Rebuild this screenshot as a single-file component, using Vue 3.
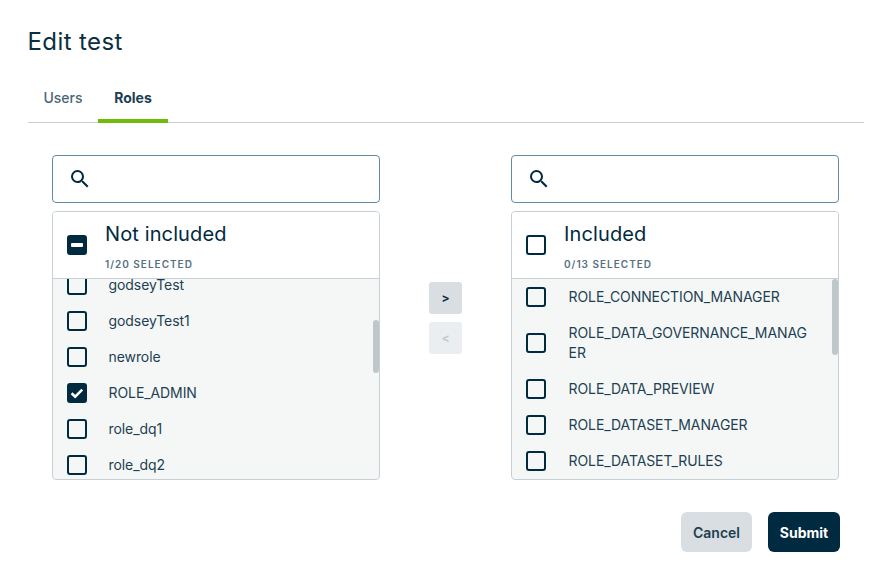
<script setup>
const panels = [
  {
    title: 'Not included', count: '1/20 SELECTED', head: 'mixed', cls: 'left',
    items: [
      { t: 'godseyTest' }, { t: 'godseyTest1' }, { t: 'newrole' },
      { t: 'ROLE_ADMIN', on: true }, { t: 'role_dq1' }, { t: 'role_dq2' },
    ],
  },
  {
    title: 'Included', count: '0/13 SELECTED', head: 'off', cls: 'right',
    items: [
      { t: 'ROLE_CONNECTION_MANAGER' }, { t: 'ROLE_DATA_GOVERNANCE_MANAGER' },
      { t: 'ROLE_DATA_PREVIEW' }, { t: 'ROLE_DATASET_MANAGER' }, { t: 'ROLE_DATASET_RULES' },
    ],
  },
]
</script>

<template>
  <div class="page">
    <h1 class="title">Edit test</h1>
    <div class="tabs">
      <div class="tab">Users</div>
      <div class="tab active">Roles</div>
    </div>
    <div class="transfer">
      <template v-for="(p, i) in panels" :key="p.title">
        <section class="side">
          <div class="search">
            <svg class="search-icon" viewBox="0 0 24 24" width="24" height="24">
              <path fill="#002a3f" d="M15.5 14h-.79l-.28-.27A6.47 6.47 0 0 0 16 9.5 6.5 6.5 0 1 0 9.5 16c1.61 0 3.09-.59 4.23-1.57l.27.28v.79l5 4.99L20.49 19l-4.99-5zm-6 0C7.01 14 5 11.99 5 9.5S7.01 5 9.5 5 14 7.01 14 9.5 11.99 14 9.5 14z"/>
            </svg>
          </div>
          <div class="panel">
            <div class="head">
              <span class="box" :class="{ filled: p.head === 'mixed' }">
                <span v-if="p.head === 'mixed'" class="dash"></span>
              </span>
              <div class="head-text">
                <div class="head-title">{{ p.title }}</div>
                <div class="head-count">{{ p.count }}</div>
              </div>
            </div>
            <div class="list" :class="p.cls">
              <div class="rows">
                <div v-for="it in p.items" :key="it.t" class="row">
                  <span class="box" :class="{ filled: it.on }">
                    <svg v-if="it.on" viewBox="0 0 20 20" width="20" height="20" class="check">
                      <path d="M4.6 10.2l3.6 3.4L15.2 6.6" fill="none" stroke="#fff" stroke-width="2.6"/>
                    </svg>
                  </span>
                  <span class="label">{{ it.t }}</span>
                </div>
              </div>
              <div class="thumb"></div>
            </div>
          </div>
        </section>
        <div v-if="i === 0" class="moves">
          <button class="move">&gt;</button>
          <button class="move off">&lt;</button>
        </div>
      </template>
    </div>
    <div class="footer">
      <button class="btn cancel">Cancel</button>
      <button class="btn submit">Submit</button>
    </div>
  </div>
</template>

<style>
html, body { margin: 0; background: #fff; }
</style>

<style scoped>
.page {
  width: 891px;
  height: 588px;
  box-sizing: border-box;
  padding: 27px 27px 0 28px;
  font-family: Inter, "Liberation Sans", sans-serif;
  color: #002a3f;
  overflow: hidden;
}
.title {
  margin: 0 0 0 -0.5px;
  font-size: 24px;
  line-height: 30px;
  font-weight: 400;
  letter-spacing: 0.4px;
  color: #0b2f42;
}
.tabs {
  display: flex;
  margin-top: 19px;
  height: 46px;
  border-bottom: 1px solid #c5d0d6;
}
.tab {
  width: 70px;
  box-sizing: border-box;
  text-align: center;
  font-size: 14px;
  line-height: 44px;
  color: #4c6675;
  font-weight: 500;
}
.tab.active {
  color: #1d3f51;
  font-weight: 700;
  height: 47px;
  border-bottom: 4px solid #6fbb0a;
}
.transfer {
  display: flex;
  margin: 32px 0 0 24px;
  align-items: flex-start;
}
.side { width: 328px; flex: none; }
.search {
  height: 48px;
  box-sizing: border-box;
  border: 1px solid #648ba3;
  border-radius: 4px;
  display: flex;
  align-items: center;
  padding-left: 15px;
}
.search-icon { display: block; }
.panel {
  margin-top: 8px;
  height: 269px;
  box-sizing: border-box;
  border: 1px solid #c5d0d6;
  border-radius: 4px;
  overflow: hidden;
  background: #f5f7f7;
}
.head {
  height: 66px;
  background: #fff;
  border-bottom: 1px solid #c5d0d6;
  display: flex;
  align-items: center;
  padding-left: 14px;
}
.box {
  width: 20px;
  height: 20px;
  flex: none;
  box-sizing: border-box;
  border: 2px solid #002a3f;
  border-radius: 3px;
  position: relative;
  display: block;
}
.box.filled { background: #002a3f; }
.check { position: absolute; left: -2px; top: -2px; display: block; }
.dash {
  position: absolute;
  left: 2px;
  right: 2px;
  top: 6px;
  height: 4px;
  border-radius: 1px;
  background: #fff;
}
.head-text { margin-left: 18px; padding-top: 2px; }
.head-title {
  font-size: 20px;
  line-height: 24px;
  color: #002a3f;
  letter-spacing: 0.12px;
}
.head-count {
  margin-top: 12px;
  font-size: 10px;
  line-height: 12px;
  font-weight: 600;
  letter-spacing: 1px;
  color: #56717f;
}
.list { position: relative; height: 201px; overflow: hidden; }
.list.left .rows { margin-top: -12px; }
.row {
  display: flex;
  align-items: center;
  padding: 8px 0 8px 14px;
}
.label {
  margin-left: 21.6px;
  width: 240px;
  font-size: 14px;
  line-height: 20px;
  letter-spacing: -0.1px;
  color: #1d3f51;
  word-break: break-all;
}
.list.right .label { margin-left: 22.6px; }
.thumb {
  position: absolute;
  right: 0;
  width: 6px;
  border-radius: 3px;
  background: #bfc7cb;
}
.list.left .thumb { top: 41px; height: 53px; }
.list.right .thumb { top: 0; height: 76px; }
.moves {
  width: 131px;
  flex: none;
  display: flex;
  flex-direction: column;
  align-items: center;
  gap: 8px;
  margin-top: 127px;
}
.move {
  width: 33px;
  height: 32px;
  border: 0;
  padding: 0 0 2px;
  border-radius: 3px;
  background: #d9dee2;
  color: #002a3f;
  font-family: inherit;
  font-size: 12px;
  font-weight: 700;
}
.move.off { background: #ebeef0; color: #c0c8cd; }
.footer {
  display: flex;
  justify-content: flex-end;
  gap: 16px;
  margin: 32px 24px 0 0;
}
.btn {
  height: 40px;
  border: 0;
  padding: 0;
  border-radius: 6px;
  font-family: inherit;
  font-size: 14px;
  font-weight: 600;
}
.cancel { width: 71px; background: #d9dee2; color: #1d3f51; }
.submit { width: 72px; background: #002a3f; color: #fff; font-weight: 700; }
</style>
